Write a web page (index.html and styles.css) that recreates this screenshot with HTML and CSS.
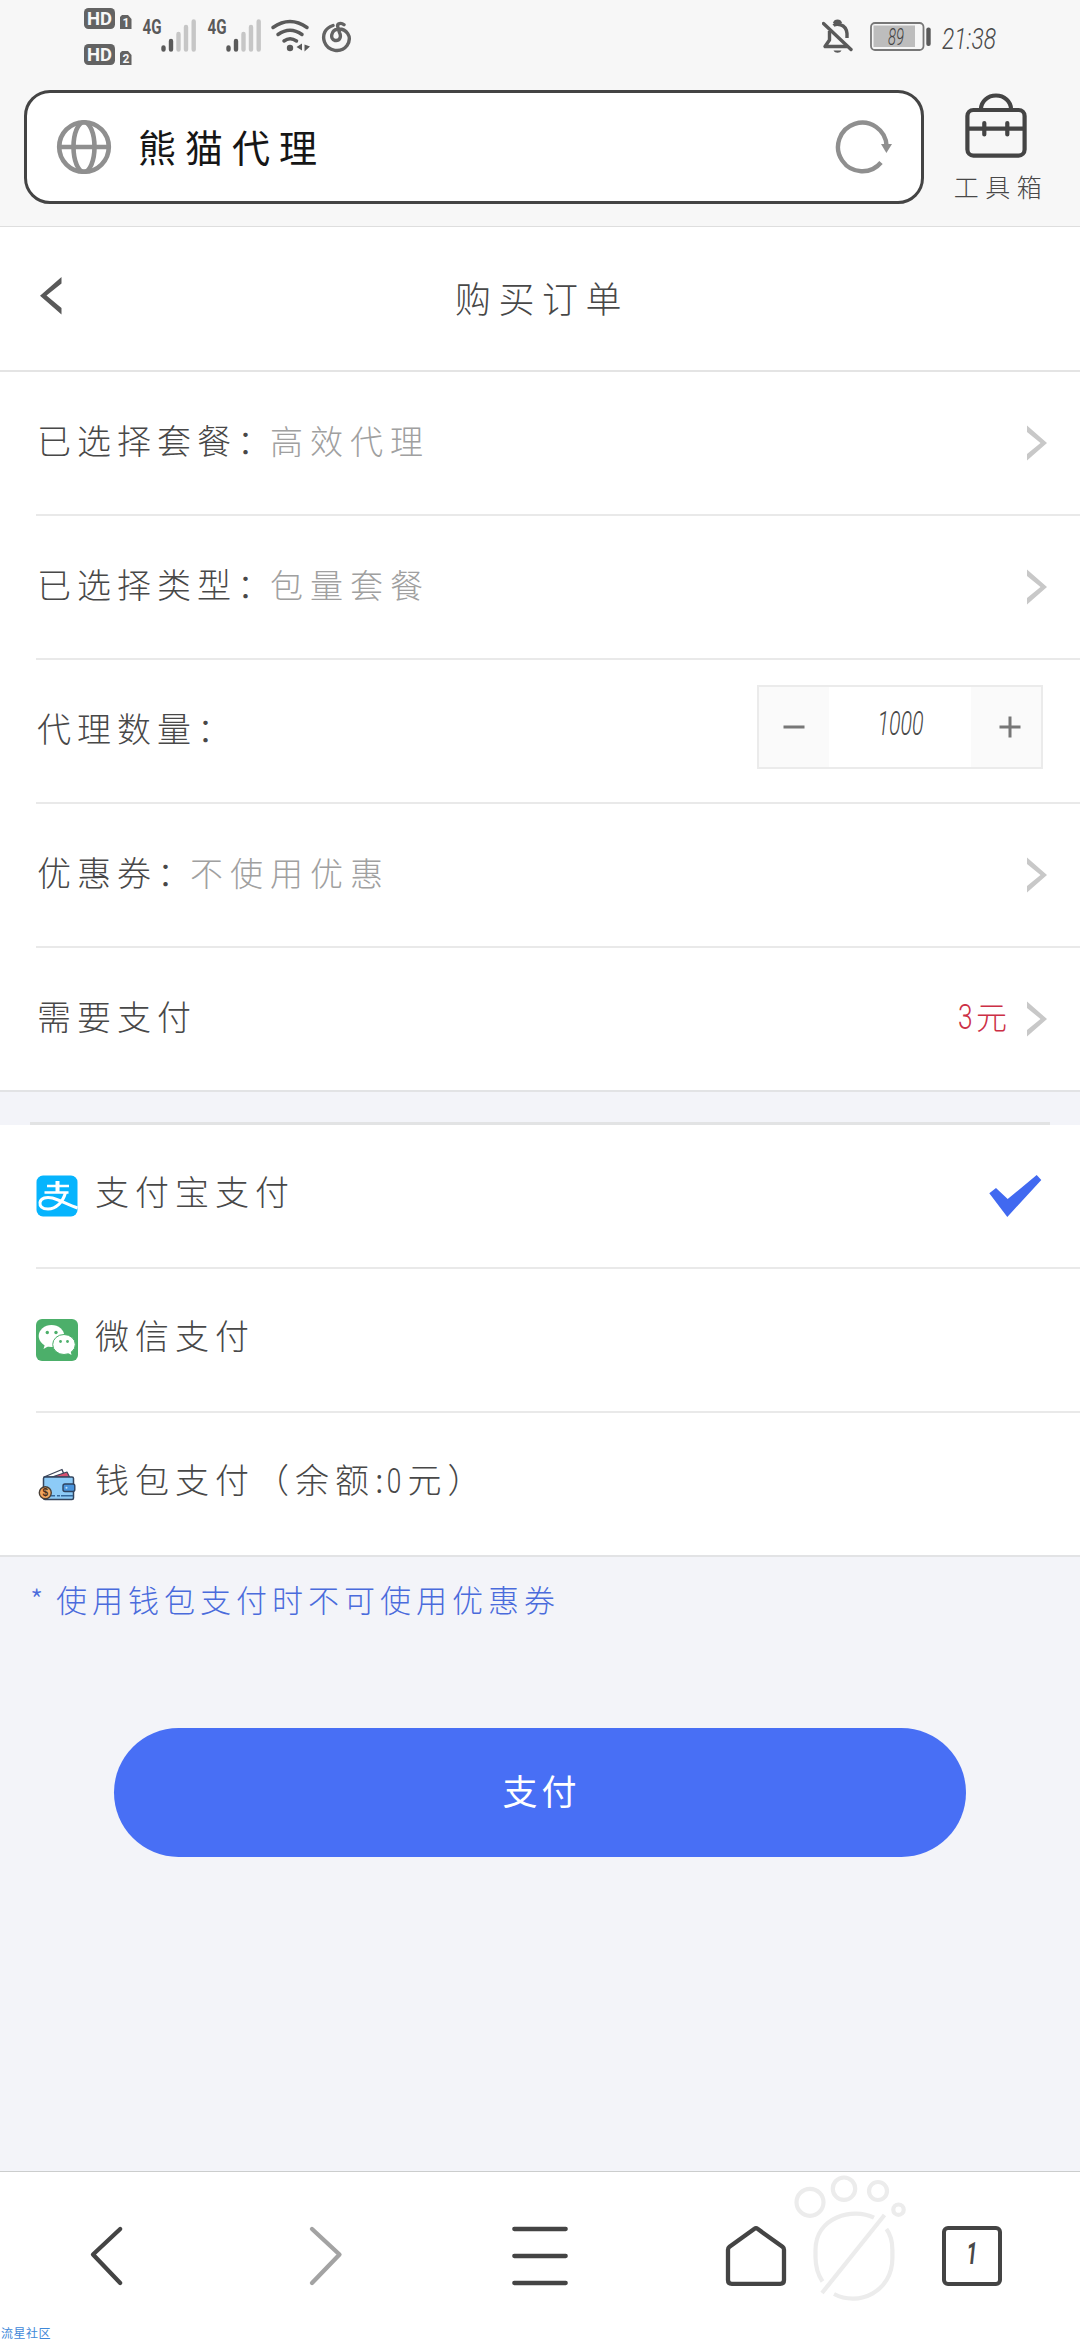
FILE: index.html
```html
<!DOCTYPE html>
<html lang="zh-CN">
<head>
<meta charset="utf-8">
<title>购买订单</title>
<link rel="stylesheet" href="styles.css">
</head>
<body>
<div class="screen">
  <header class="chrome">
    <div class="status">
      <svg class="st" width="48" height="72" viewBox="84 0 48 72">
        <g fill="#636363">
          <rect x="84" y="8" width="31" height="21" rx="4.5"/>
          <rect x="84" y="44" width="31" height="21" rx="4.5"/>
          <path d="M122 15h6l3.500 4v10H120V17z"/>
          <path d="M122 51h6l3.500 4v10H120V53z"/>
        </g>
        <g class="hd">
          <text x="99.500" y="25" font-size="18" textLength="25" lengthAdjust="spacingAndGlyphs">HD</text>
          <text x="99.500" y="61" font-size="18" textLength="25" lengthAdjust="spacingAndGlyphs">HD</text>
          <text x="126" y="27" font-size="12">1</text>
          <text x="126" y="63" font-size="12">2</text>
        </g>
      </svg>
      <svg class="st sim1" width="56" height="72" viewBox="142 0 56 72">
        <text class="net" x="142.500" y="34" textLength="19" lengthAdjust="spacingAndGlyphs">4G</text>
        <g stroke-width="4.400" stroke-linecap="round">
          <path stroke="#5a5a5a" d="M163.500 47.500v2M171 41v8.500"/>
          <path stroke="#c6c6c6" d="M178.500 34v15.500M186 27v22.500M193.700 21.500v28"/>
        </g>
      </svg>
      <svg class="st sim2" width="56" height="72" viewBox="142 0 56 72">
        <text class="net" x="142.500" y="34" textLength="19" lengthAdjust="spacingAndGlyphs">4G</text>
        <g stroke-width="4.400" stroke-linecap="round">
          <path stroke="#5a5a5a" d="M163.500 47.500v2M171 41v8.500"/>
          <path stroke="#c6c6c6" d="M178.500 34v15.500M186 27v22.500M193.700 21.500v28"/>
        </g>
      </svg>
      <svg class="st wifi" width="42" height="72" viewBox="270 0 42 72" fill="none" stroke="#5a5a5a" stroke-width="3.500" stroke-linecap="round">
        <path d="M273 27.500q17-12 34 0M278 34.500q12-8.500 24 0M284 41q6-4.500 12.500 0"/>
        <circle cx="290" cy="48" r="3.200" fill="#5a5a5a" stroke="none"/>
        <path d="M302 43.500v7l-5.500-3.500zM304.500 44.500v7l5.500-5z" fill="#5a5a5a" stroke="none"/>
      </svg>
      <svg class="st music" width="32" height="72" viewBox="321 0 32 72" fill="none" stroke="#636363" stroke-width="3.400" stroke-linecap="round">
        <path d="M333 25.500C325 28 322 35 324.500 42c3.500 9.500 16.500 11.500 22.500 3.500 6-9-1-17-9-16.500-7 1-8.500 10-3 11.500 5 .7 6.500-4 4.500-8l-1.800-6c-.7-3 3.300-4.300 6.300-1.800"/>
      </svg>
      <span class="grow"></span>
      <svg class="st" width="32" height="72" viewBox="822 0 32 72" fill="none" stroke="#5a5a5a" stroke-width="3.400" stroke-linejoin="round">
        <path d="M829.500 31v9l-4.500 6.500h22M833.500 25.500c2-1.500 12.500-3 13.500 8v4.500M834.500 23.500c1-3 5-3 6 0"/>
        <path d="M823.500 23.500l27.500 26" stroke-linecap="round"/>
        <path d="M833.500 50.500h8c-1.500 3-6.500 3-8 0z" fill="#5a5a5a" stroke="none"/>
      </svg>
      <svg class="st batt" width="64" height="72" viewBox="869 0 64 72">
        <rect x="871" y="23" width="52.500" height="27" rx="4" fill="none" stroke="#777" stroke-width="1.800"/>
        <rect x="873.500" y="25.500" width="41.500" height="21.500" fill="#bdbdbd"/>
        <rect x="926.300" y="27.500" width="4.400" height="18.500" rx="2" fill="#5a5a5a"/>
        <text class="pct" x="888" y="45" textLength="16" lengthAdjust="spacingAndGlyphs">89</text>
      </svg>
      <svg class="st clock" width="64" height="72" viewBox="938 0 64 72">
        <text class="time" x="942" y="49" textLength="54" lengthAdjust="spacingAndGlyphs">21:38</text>
      </svg>
    </div>
    <div class="addr-row">
      <div class="addr">
        <svg width="56" height="56" viewBox="56 119 56 56" fill="none" stroke="#8f8f8f" stroke-width="4.600">
          <circle cx="84" cy="147" r="24.800"/>
          <ellipse cx="84" cy="147" rx="10.500" ry="24.800"/>
          <path d="M59 147h50"/>
        </svg>
        <span class="site">熊猫代理</span>
        <svg width="60" height="56" viewBox="834 119 60 56">
          <path d="M881 162.500A24.300 24.300 0 1 1 886.600 146" fill="none" stroke="#8f8f8f" stroke-width="4.400"/>
          <path d="M881 144h11l-5.600 9z" fill="#8f8f8f"/>
        </svg>
      </div>
      <div class="tools">
        <svg width="64" height="68" viewBox="964 92 64 68" fill="none" stroke="#444" stroke-width="4.200">
          <rect x="967.400" y="110" width="57.200" height="45.600" rx="6"/>
          <path d="M981 109a15 13.500 0 0 1 30 0M967 128.700h57"/>
          <path d="M984.300 123v11.500M1007.300 123v11.500" stroke-linecap="round"/>
        </svg>
        <span>工具箱</span>
      </div>
    </div>
  </header>

  <nav class="title-bar">
    <svg width="24" height="40" viewBox="39 276 24 40"><path d="M61.500 277v6.500L46.500 295.500 61.500 308v6.500L40 295.700z" fill="#595959"/></svg>
    <h1>购买订单</h1>
  </nav>

  <section class="list">
    <div class="row"><span class="label">已选择套餐：</span><span class="value">高效代理</span><svg class="chev" width="20" height="36" viewBox="0 0 20 36"><path d="M0 .5v6.500L13.500 18 0 29v6.500L20 18z"/></svg></div>
    <div class="row"><span class="label">已选择类型：</span><span class="value">包量套餐</span><svg class="chev" width="20" height="36" viewBox="0 0 20 36"><path d="M0 .5v6.500L13.500 18 0 29v6.500L20 18z"/></svg></div>
    <div class="row"><span class="label">代理数量：</span>
      <div class="stepper">
        <span class="btn"><svg width="22" height="22" viewBox="0 0 22 22"><path d="M.5 11h21"/></svg></span>
        <span class="num"><i>1000</i></span>
        <span class="btn plus"><svg width="22" height="22" viewBox="0 0 22 22"><path d="M.5 11h21M11 .5v21"/></svg></span>
      </div>
    </div>
    <div class="row"><span class="label">优惠券：</span><span class="value">不使用优惠</span><svg class="chev" width="20" height="36" viewBox="0 0 20 36"><path d="M0 .5v6.500L13.500 18 0 29v6.500L20 18z"/></svg></div>
    <div class="row last"><span class="label">需要支付</span><span class="price"><i>3</i>元</span><svg class="chev" width="20" height="36" viewBox="0 0 20 36"><path d="M0 .5v6.500L13.500 18 0 29v6.500L20 18z"/></svg></div>
  </section>

  <div class="gap"></div>

  <section class="list pay">
    <div class="row">
      <svg class="ico" width="42" height="42" viewBox="0 0 42 42">
        <rect x=".5" y=".5" width="41" height="41" rx="6.500" fill="#06b4fd"/>
        <g fill="none" stroke="#fff">
          <path d="M11 11h22M8.500 17.500h24" stroke-width="2.400"/>
          <path d="M21.500 6v11" stroke-width="4"/>
          <path d="M29.500 17.500C27 27 20 34 12 34c-6 0-8.500-3-8-6.500.7-4.500 6.500-6 12.500-4.500C24 25 32 30 41.500 33" stroke-width="3"/>
        </g>
      </svg>
      <span class="label">支付宝支付</span>
      <svg class="check" width="54" height="44" viewBox="988 1173 54 44"><path d="M989.300 1192.300l6.700-5.300 11.700 11 29-24 4.600 5-34 37z" fill="#4169f0"/></svg>
    </div>
    <div class="row">
      <svg class="ico" width="42" height="42" viewBox="0 0 42 42">
        <rect width="42" height="42" rx="6" fill="#4caf6a"/>
        <path d="M9.500 23.500L7.500 30l7-4z" fill="#fff"/>
        <ellipse cx="15.500" cy="17" rx="12.800" ry="11" fill="#fff"/>
        <ellipse cx="28" cy="25.500" rx="11.300" ry="10" fill="#fff" stroke="#4caf6a" stroke-width="1"/>
        <path d="M32 34l3.500 2-1-4.500z" fill="#fff"/>
        <g fill="#4caf6a"><circle cx="11.300" cy="13.500" r="1.700"/><circle cx="20" cy="13.500" r="1.700"/><circle cx="24.500" cy="22.500" r="1.400"/><circle cx="31.500" cy="22.500" r="1.400"/></g>
      </svg>
      <span class="label">微信支付</span>
    </div>
    <div class="row">
      <svg class="ico" width="42" height="42" viewBox="36 1464 42 42" stroke-linejoin="round">
        <path d="M44 1478l18-7.500 3 7.500z" fill="#fff" stroke="#3c4458" stroke-width="1.300"/>
        <path d="M52 1478l15-5 2.500 5z" fill="#d9506f" stroke="#3c4458" stroke-width="1.200"/>
        <rect x="43.500" y="1478" width="30" height="22.500" rx="1.500" fill="#8dcbf7" stroke="#34455e" stroke-width="1.500"/>
        <path d="M50 1496.800h23" stroke="#34689c" stroke-width="1.500" stroke-dasharray="5 2 3 1 20"/>
        <rect x="63" y="1485" width="11.800" height="7.500" rx="2" fill="#4a94dc" stroke="#2f4360" stroke-width="1.400"/>
        <circle cx="66.500" cy="1488.700" r="1" fill="#bfe2fa"/>
        <circle cx="45.300" cy="1493.800" r="6" fill="#f2a65e" stroke="#4a4038" stroke-width="1.400"/>
        <text class="coin" x="45.300" y="1497.300">$</text>
      </svg>
      <span class="label">钱包支付（余额<span class="bal">:<i>0</i></span>元）</span>
    </div>
  </section>

  <p class="tip"><span class="star">*</span>使用钱包支付时不可使用优惠券</p>
  <button class="submit" type="button">支付</button>

  <footer class="toolbar">
    <span><svg width="64" height="64" viewBox="76 2224 64 64"><path d="M120.200 2229L93 2254.500l27.200 28.500"/></svg></span>
    <span class="off"><svg width="64" height="64" viewBox="292 2224 64 64"><path d="M312 2229l27.500 25.500L312 2283"/></svg></span>
    <span><svg width="64" height="64" viewBox="508 2224 64 64"><path d="M514.300 2229h51.400M514.300 2256h51.400M514.300 2283h51.400"/></svg></span>
    <span><svg width="64" height="64" viewBox="724 2224 64 64"><path d="M754.500 2228.800q1.500-1.200 3 0l25 18q1.500 1.200 1.500 3V2280q0 3.800-3.800 3.800h-48.400q-3.800 0-3.800-3.800V2249.800q0-1.800 1.500-3z"/></svg></span>
    <span><b class="tabs"><i>1</i></b></span>
  </footer>

  <svg class="paw" width="100" height="132" viewBox="792 2172 100 132" fill="none" stroke="#ececec" stroke-width="4.200">
    <circle cx="810" cy="2202.300" r="13.500"/>
    <circle cx="844" cy="2188.700" r="11.200"/>
    <circle cx="878" cy="2191" r="9"/>
    <circle cx="898.500" cy="2209.700" r="5.200"/>
    <path d="M874 2217.700C853 2207 815.500 2217 815.500 2250v7q0 14 7 24.500M886.400 2229q6 8 6 21v8c0 34-34 49-58.400 36M884.500 2215L822 2293"/>
  </svg>
  <span class="mark">流星社区</span>
</div>
</body>
</html>
```
FILE: styles.css
```css
* { box-sizing: border-box; }
body {
  margin: 0;
  font-family: "Noto Sans CJK SC", "Noto Sans", sans-serif;
  font-weight: 300;
  color: #484848;
}
svg { display: block; flex: none; }
.screen {
  position: relative;
  display: flex;
  flex-direction: column;
  width: 1080px;
  height: 2340px;
  overflow: hidden;
  background: #f3f4f9;
}

/* browser chrome */
.chrome { height: 227px; background: #f7f7f7; border-bottom: 1px solid #dedede; }
.status { display: flex; height: 72px; padding: 0 78px 0 84px; }
.sim1 { margin-left: 10px; }
.sim2 { margin-left: 9px; }
.wifi { margin-left: 7px; }
.music { margin-left: 9px; }
.batt { margin-left: 15px; }
.clock { margin-left: 5px; overflow: visible; }
.grow { flex: 1; }
.hd { fill: #f7f7f7; font-family: Roboto, sans-serif; font-weight: 700; text-anchor: middle; }
.net { fill: #5a5a5a; font: 700 20px Roboto, sans-serif; }
.pct { fill: #444; font: italic 300 24px Roboto, sans-serif; }
.time { fill: #4a4a4a; font: italic 300 30px Roboto, sans-serif; }

.addr-row { display: flex; padding: 18px 0 0 24px; gap: 31px; }
.addr {
  display: flex;
  align-items: center;
  width: 900px;
  height: 114px;
  padding: 0 27px 0 29px;
  border: 3px solid #444;
  border-radius: 26px;
  background: #fff;
}
.site {
  flex: 1;
  margin-top: -3px;
  padding-left: 26px;
  font-size: 38px;
  font-weight: 400;
  line-height: 60px;
  letter-spacing: 9px;
  color: #161616;
}
.tools { display: flex; flex-direction: column; align-items: center; width: 82px; padding-top: 2px; }
.tools span { font-size: 25px; line-height: 32px; margin-top: 10px; letter-spacing: 6.500px; margin-right: -10px; white-space: nowrap; }

/* page title */
.title-bar {
  display: grid;
  grid-template-columns: 24px 1fr 24px;
  align-items: center;
  height: 145px;
  padding: 0 39px;
  background: #fff;
  border-bottom: 2px solid #e4e4e4;
}
.title-bar svg { margin-top: -6px; }
.title-bar h1 { margin: -3px 0 0 4px; text-align: center; font-size: 36px; font-weight: 300; line-height: 50px; letter-spacing: 7.500px; }

/* rows */
.list { background: #fff; border-bottom: 2px solid #e2e3e5; }
.row {
  display: flex;
  align-items: center;
  height: 144px;
  margin-left: 36px;
  padding-right: 33px;
  border-bottom: 2px solid #e9e9e9;
}
.row:last-child { height: 142px; border-bottom: 0; }
.label { font-size: 34px; line-height: 50px; letter-spacing: 6px; margin: -6px 0 0 1px; white-space: nowrap; }
.value { font-size: 33px; line-height: 50px; letter-spacing: 7px; margin: -6px 0 0 -7px; color: #a0a0a0; }
.chev { margin-left: auto; fill: #c8c8c8; }
.price { display: flex; align-items: center; gap: 4px; margin: -8px 0 0 auto; font-size: 31px; color: #cc2f45; }
.price + .chev { margin-left: 20px; }
i { display: inline-block; font: italic 300 35px/40px Roboto, sans-serif; transform: scaleX(.66); }
.price i { font-style: normal; font-size: 35px; width: 16px; transform: translateY(3px) scaleX(.75); }

.stepper { display: flex; width: 286px; height: 84px; margin: -8px 4px 0 auto; border: 2px solid #ebebeb; }
.btn { display: flex; align-items: center; justify-content: center; width: 70px; background: #fafafa; }
.plus { padding-left: 8px; }
.btn svg { stroke: #777; stroke-width: 3; }
.num { flex: 1; text-align: center; line-height: 74px; }
.num i { transform: translate(1px, 4px) scaleX(.63); font-size: 34px; }

.gap {
  height: 33px;
  background: linear-gradient(#e2e3e4, #e2e3e4) 30px 100% / 1020px 3px no-repeat;
}
.pay .label { margin: -10px 0 0 17px; }
.check { margin-left: auto; margin-right: 5px; }
.bal { letter-spacing: 0; }
.bal i { font-style: normal; font-size: 35px; width: 21px; margin-right: 3px; transform: scaleX(.75); }
.coin { font: 700 10px "Liberation Sans", sans-serif; text-anchor: middle; fill: #4a3020; }

.tip { margin: 18px 0 0 30px; font-size: 31px; line-height: 48px; letter-spacing: 5px; color: #4a6bdc; white-space: nowrap; }
.star { display: inline-block; width: 26px; letter-spacing: 0; font-size: 30px; }
.submit {
  width: 852px;
  height: 129px;
  margin: 105px 0 0 114px;
  padding: 0 0 7px 3px;
  border: 0;
  border-radius: 65px;
  background: #486ff5;
  color: #fff;
  font: 400 35px "Noto Sans CJK SC", sans-serif;
  letter-spacing: 4px;
}

/* bottom toolbar */
.toolbar { display: flex; margin-top: auto; height: 169px; border-top: 1px solid #cbcdcd; background: #fff; }
.toolbar > span { display: flex; justify-content: center; width: 216px; padding-top: 52px; }
.toolbar svg { fill: none; stroke: #444; stroke-width: 4.300; stroke-linecap: round; stroke-linejoin: round; }
.toolbar .off svg { stroke: #a3a3a3; }
.tabs { width: 60px; height: 60px; margin-top: 2px; border: 4.300px solid #444; border-radius: 6px; text-align: center; line-height: 50px; }
.tabs i { font-size: 32px; font-weight: 700; transform: translateY(2px) scaleX(.6); }
.paw { position: absolute; left: 792px; top: 2172px; overflow: visible; }
.mark { position: absolute; left: 1px; bottom: 0; font-size: 12px; font-weight: 400; line-height: 15px; letter-spacing: .5px; color: #3f88d8; }
```
